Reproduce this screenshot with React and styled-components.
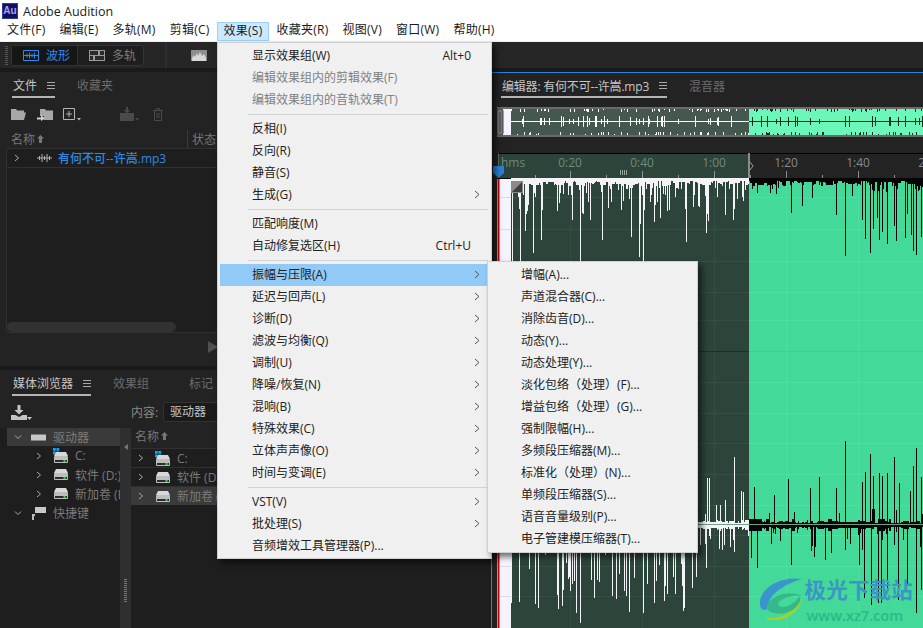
import React from "react";
import styled, { createGlobalStyle } from "styled-components";

const FONT = `"Open Sans", "Noto Sans CJK SC", sans-serif`;

const GlobalStyle = createGlobalStyle`
  html, body {
    margin: 0;
    background: #1c1c1c;
    overflow: hidden;
  }
  * { box-sizing: border-box; }
`;

// waveform data, seeded so the picture stays the same on each load
const makeRand = (seed) => () => {
  seed = (seed + 0x6d2b79f5) | 0;
  let t = Math.imul(seed ^ (seed >>> 15), 1 | seed);
  t = (t + Math.imul(t ^ (t >>> 7), 61 | t)) ^ t;
  return ((t ^ (t >>> 14)) >>> 0) / 4294967296;
};

const line = (x, y1, y2) => `M${x + 0.5} ${y1}V${y2}`;

const buildTop = (from, to, seed, chance, min, range) => {
  const rand = makeRand(seed);
  let d = "";
  let mass = 4;
  for (let x = from; x < to; x++) {
    if (rand() < 0.45) mass = 2 + rand() * 5;
    d += line(x, 178, 179 + mass);
    const p = typeof chance === "function" ? chance(x) : chance;
    if (rand() < p) d += line(x, 178, 186 + min + rand() * rand() * range);
  }
  return d;
};

const buildLower = (from, to, seed, upChance, downChance, upLen, downLen, band) => {
  const rand = makeRand(seed);
  let d = "";
  let mass = 2;
  for (let x = from; x < to; x++) {
    if (rand() < 0.4) mass = 1 + rand() * band + (rand() < 0.1 ? 2.5 : 0);
    d += line(x, 524 - mass, 526 + mass);
    if (rand() < upChance) d += line(x, 524, 516 - rand() * rand() * upLen);
    if (rand() < downChance) d += line(x, 524, 532 + rand() * downLen);
  }
  return d;
};

const spikes = (list, base) => list.map(([x, y]) => line(x, base, y)).join("");

const TOP_LIGHT =
  buildTop(510, 748, 11, 0.3, 2, 62) +
  spikes(
    [[511, 262], [519, 262], [532, 253], [540, 240], [579, 262], [638, 257], [642, 262], [653, 222], [668, 210], [685, 242], [705, 233], [724, 210], [697, 206], [706, 214], [707, 221], [733, 209]],
    178
  );
const TOP_DARK =
  buildTop(748, 923, 23, (x) => (x < 858 ? 0.05 : 0.2), 0, 22) +
  spikes(
    [[756, 193], [775, 194], [790, 213], [801, 206], [811, 198], [835, 215], [844, 256], [861, 220], [864, 239], [869, 253], [872, 229], [876, 218], [878, 240], [881, 232], [886, 244], [893, 226], [895, 241], [904, 238], [906, 214], [910, 235], [912, 251], [915, 255], [920, 237]],
    178
  );
const LOW_LIGHT =
  buildLower(510, 697, 37, 0.2, 0.34, 60, 82, 3) +
  buildLower(697, 748, 41, 0.05, 0.14, 10, 18, 3) +
  spikes([[706, 478], [708, 478], [715, 505], [719, 505], [724, 500], [733, 457], [740, 491], [742, 492]], 524) +
  spikes([[510, 603], [537, 608], [575, 613], [579, 623], [642, 613], [653, 603], [672, 577], [705, 568], [733, 552], [723, 545]], 524);
const LOW_DARK =
  buildLower(748, 923, 53, 0.06, 0.07, 24, 22, 2) +
  spikes(
    [[753, 487], [773, 495], [787, 479], [809, 488], [818, 477], [835, 488], [844, 441], [861, 482], [864, 472], [869, 454], [872, 476], [878, 473], [881, 476], [886, 473], [893, 457], [898, 483], [909, 491], [912, 466], [915, 448], [920, 477]],
    524
  ) +
  spikes(
    [[750, 558], [756, 568], [770, 544], [790, 565], [813, 557], [824, 560], [830, 553], [844, 550], [858, 565], [863, 598], [870, 605], [877, 603], [880, 603], [886, 590], [897, 600], [906, 584], [915, 613], [920, 590]],
    524
  );

const buildOverview = (from, to, seed) => {
  const rand = makeRand(seed);
  let d = "";
  for (let x = from; x < to; x++) {
    const big = rand() < 0.16;
    const h = big ? 1.5 + rand() * 4 : 0;
    d += line(x, 121 - h, 122 + h);
    if (rand() < 0.2) d += line(x, 109, 110 + rand() * 2.5);
    if (rand() < 0.2) d += line(x, 134 - rand() * 2.5, 135);
  }
  return d;
};
const OV_LIGHT = buildOverview(509, 748, 61);
const OV_DARK = buildOverview(748, 923, 67);

const Page = styled.div`
  position: relative;
  width: 923px;
  height: 628px;
  overflow: hidden;
  display: flex;
  flex-direction: column;
  font-family: ${FONT};
  font-size: 12px;
  background: #1a1a1a;
`;

const TitleBar = styled.div`
  height: 21px;
  background: #fff;
  display: flex;
  align-items: center;
  padding: 1px 0 0 2px;
  gap: 5px;
  color: #1a1a1a;
  font-size: 12.5px;
`;

const AppLogo = styled.div`
  width: 16px;
  height: 16px;
  background: #10105e;
  border: 1px solid #3a3a90;
  color: #a3a3ff;
  font-family: "Liberation Sans", sans-serif;
  font-size: 10px;
  font-weight: 700;
  line-height: 14px;
  text-align: center;
`;

const MenuBar = styled.div`
  height: 21px;
  background: #fff;
  border-bottom: 1px solid #f0f0f0;
  display: flex;
  align-items: flex-end;
  color: #1a1a1a;
  letter-spacing: 0.25px;
`;

const MenuEntry = styled.div`
  height: 19px;
  padding: 0 ${(p) => (p.$open ? 6 : 7)}px;
  line-height: 16px;
  ${(p) => p.$open && `background: #cce8ff; border: 1px solid #99d1ff;`}
`;

const ToolBar = styled.div`
  height: 26px;
  background: #262626;
  display: flex;
  align-items: center;
  padding-left: 5px;
`;

const Grip = styled.div`
  width: 3px;
  height: 19px;
  margin-right: 3px;
  background: repeating-linear-gradient(#555 0 1px, transparent 1px 2px);
`;

const ModeGroup = styled.div`
  width: 133px;
  height: 21px;
  display: flex;
  border: 1px solid #333;
  border-radius: 3px;
  background: #1e1e1e;
`;

const ModeButton = styled.div`
  flex: 1;
  display: flex;
  align-items: center;
  gap: 7px;
  padding-left: 11px;
  color: ${(p) => (p.$active ? "#2d8ceb" : "#7c7c7c")};
  background: ${(p) => (p.$active ? "#161616" : "transparent")};
  & + & { border-left: 1px solid #333; }
`;

const ToolDivider = styled.div`
  width: 2px;
  height: 26px;
  background: #2f2f2f;
  margin: 0 24px 0 21px;
`;

const Workspace = styled.div`
  flex: 1;
  min-height: 0;
  padding-top: 4px;
  display: grid;
  grid-template-columns: 491px 1fr;
`;

const LeftColumn = styled.div`
  display: flex;
  flex-direction: column;
  gap: 4px;
  min-height: 0;
`;

const Panel = styled.section`
  background: #232323;
  display: flex;
  flex-direction: column;
  min-height: 0;
  ${(p) => (p.$height ? `height: ${p.$height}px;` : "flex: 1;")}
`;

const TabRow = styled.div`
  height: ${(p) => p.$height || 26}px;
  flex-shrink: 0;
  display: flex;
  padding-left: ${(p) => p.$left || 12}px;
  gap: 22px;
`;

const Tab = styled.div`
  display: flex;
  align-items: center;
  gap: 10px;
  padding: 2px 0 0 ${(p) => (p.$active ? 1 : 0)}px;
  margin-left: ${(p) => p.$push || 0}px;
  color: ${(p) => (p.$active ? "#c6c6c6" : "#6c6c6c")};
  border-bottom: 2px solid ${(p) => (p.$active ? "#b4b4b4" : "transparent")};
`;

const EditorTab = styled(Tab)`
  letter-spacing: -0.2px;
`;

const FileTools = styled.div`
  height: 32px;
  flex-shrink: 0;
  display: flex;
  align-items: center;
  padding-left: 11px;
`;

const ToolIcon = styled.svg`
  display: block;
  flex-shrink: 0;
  margin-right: ${(p) => p.$gap || 0}px;
  margin-left: ${(p) => p.$lead || 0}px;
`;

const ColumnHead = styled.div`
  height: 18px;
  flex-shrink: 0;
  display: flex;
  align-items: center;
  padding-left: 11px;
  color: #777;
`;

const HeadCell = styled.div`
  width: ${(p) => p.$width}px;
  display: flex;
  align-items: center;
  gap: 2px;
  ${(p) => p.$divided && `border-left: 1px solid #3a3a3a; padding-left: 4px;`}
`;

const FileList = styled.div`
  height: 185px;
  flex-shrink: 0;
  margin-left: 6px;
  background: #1e1e1e;
  border: 1px solid #303030;
  border-width: 1px 0 1px 1px;
  display: flex;
  flex-direction: column;
`;

const FileRow = styled.div`
  height: 19px;
  display: flex;
  align-items: center;
  padding-left: 6px;
  border-bottom: 1px solid #303030;
`;

const FileName = styled.span`
  margin-left: 6px;
  color: #2f8ae0;
  font-weight: 500;
`;

const ScrollThumb = styled.div`
  margin-top: auto;
  width: 169px;
  height: 10px;
  border-radius: 5px;
  background: #323232;
`;

const PanelFoot = styled.div`
  flex: 1;
  display: flex;
  align-items: center;
  padding: 0 0 6px 208px;
`;

const MediaTools = styled.div`
  height: 32px;
  flex-shrink: 0;
  display: flex;
  align-items: center;
  padding-left: 11px;
`;

const ContentLabel = styled.span`
  margin-left: 99px;
  color: #8a8a8a;
  width: 32px;
`;

const ContentSelect = styled.div`
  width: 200px;
  height: 20px;
  background: #1a1a1a;
  border: 1px solid #333;
  border-radius: 3px;
  color: #c4c4c4;
  padding-left: 6px;
  line-height: 17px;
`;

const MediaBody = styled.div`
  flex: 1;
  min-height: 0;
  display: grid;
  grid-template-columns: 120px 11px 1fr;
`;

const Tree = styled.div`
  padding-left: 7px;
  background: #1e1e1e;
  overflow: hidden;
`;

const TreeRow = styled.div`
  display: flex;
  align-items: center;
  white-space: nowrap;
  height: ${(p) => (p.$head ? 18 : 19)}px;
  padding-left: ${(p) => (p.$child ? 28 : 7)}px;
  color: #7a7a7a;
  background: ${(p) => (p.$head ? "#3a3a3a" : "transparent")};
`;

const RowChevron = styled.svg`
  flex-shrink: 0;
  margin-right: ${(p) => (p.$down ? 9 : 10)}px;
`;

const RowLabel = styled.span`
  margin-left: 6px;
`;

const Splitter = styled.div`
  background: #2f2f2f;
  display: flex;
  flex-direction: column;
  align-items: center;
  padding-top: 16px;
`;

const SplitArrow = styled.div`
  width: 0;
  height: 0;
  border: 3px solid transparent;
  border-right: 4px solid #777;
  border-left: 0;
`;

const SplitDots = styled.div`
  width: 3px;
  height: 24px;
  margin-top: 129px;
  background: repeating-linear-gradient(#777 0 1px, transparent 1px 2px);
`;

const DriveList = styled.div`
  background: #1e1e1e;
  overflow: hidden;
`;

const DriveHead = styled.div`
  height: 20px;
  padding: 0 0 4px 4px;
  display: flex;
  align-items: center;
  gap: 2px;
  color: #777;
  background: #232323;
`;

const DriveRow = styled.div`
  height: 19px;
  display: flex;
  align-items: center;
  white-space: nowrap;
  padding-left: 6px;
  color: #7a7a7a;
  border-top: 1px solid #303030;
  background: ${(p) => (p.$selected ? "#3a3a3a" : "transparent")};
`;

const EditorPanel = styled.section`
  background: #232323;
  border-top: 1px solid #2a84e0;
  border-left: 1px solid #2a84e0;
  display: flex;
  flex-direction: column;
  min-height: 0;
`;

const EditorGutter = styled.div`
  margin-left: 5px;
  position: relative;
`;

const Overview = styled(EditorGutter)`
  height: 30px;
  margin-top: 9px;
  margin-bottom: 16px;
`;

const Ruler = styled(EditorGutter)`
  height: 25px;
`;

const Playhead = styled.svg`
  position: absolute;
  left: -4px;
  top: 13px;
`;

const Wave = styled(EditorGutter)`
  flex: 1;
`;

const Drawing = styled.svg`
  display: block;
`;

const Watermark = styled.div`
  position: absolute;
  right: 10px;
  bottom: 3px;
  display: flex;
  align-items: flex-start;
  gap: 1px;
`;

const MarkLogo = styled.svg`
  margin-top: 2px;
`;

const MarkText = styled.div`
  display: flex;
  flex-direction: column;
`;

const MarkTitle = styled.div`
  font-size: 21.5px;
  font-weight: 700;
  line-height: 28px;
  color: #3c95c4;
  letter-spacing: 0.2px;
`;

const MarkUrl = styled.div`
  margin: 3px 0 0 2px;
  font-size: 14.5px;
  font-weight: 600;
  line-height: 18px;
  color: #2cb88a;
`;

const Menu = styled.div`
  position: absolute;
  left: ${(p) => p.$left}px;
  top: ${(p) => p.$top}px;
  width: ${(p) => p.$width}px;
  background: #f0f0f0;
  border: 1px solid #cfcfcf;
  padding: 2px 2px ${(p) => p.$bottom}px;
  box-shadow: 4px 4px 6px rgba(0, 0, 0, 0.55);
  color: #222;
`;

const MenuRow = styled.div`
  height: 22px;
  display: flex;
  align-items: center;
  padding: 0 9px 2px ${(p) => p.$indent}px;
  color: ${(p) => (p.$disabled ? "#808080" : "#222")};
  background: ${(p) => (p.$active ? "#91c9f7" : "transparent")};
`;

const MenuLabel = styled.span`
  flex: 1;
  white-space: nowrap;
`;

const Shortcut = styled.span`
  margin-right: 9px;
`;

const MenuRule = styled.div`
  height: 7px;
  margin-left: 28px;
  margin-right: 1px;
  display: flex;
  align-items: center;
  &::after {
    content: "";
    flex: 1;
    height: 1px;
    background: #d2d2d2;
  }
`;

const Burger = () => (
  <svg width="8" height="7" viewBox="0 0 8 7">
    <path d="M0 .5H8M0 3.5H8M0 6.5H8" stroke="#aaa" fill="none" />
  </svg>
);

const SortArrow = () => (
  <svg width="7" height="8" viewBox="0 0 7 8">
    <path d="M3.5 0L7 3.5H5V8H2V3.5H0Z" fill="#777" />
  </svg>
);

const Chevron = ({ down }) => (
  <RowChevron $down={down} width="8" height="8" viewBox="0 0 8 8">
    <path d={down ? "M1 2.5L4 5.5L7 2.5" : "M2 1L5.5 4L2 7"} stroke="#aaa" fill="none" />
  </RowChevron>
);

const WaveGlyph = ({ color }) => (
  <ToolIcon $lead={6} width="15" height="8" viewBox="0 0 15 8">
    <path d="M0 4H15M2.5 2V6M5 0V8M7.5 2V6M10 0V8M12.5 2V6" stroke={color} fill="none" />
  </ToolIcon>
);

const Drive = () => (
  <ToolIcon width="16" height="11" viewBox="0 0 16 11">
    <path d="M3 0H13L15 4H1Z" fill="#d8d8d8" />
    <rect x="1" y="4" width="14" height="7" rx="1" fill="#bdbdbd" />
    <rect x="2" y="8" width="12" height="2" fill="#2c2c2c" />
    <rect x="10.500" y="8" width="2" height="2" fill="#35d04a" />
  </ToolIcon>
);

const SystemDrive = () => (
  <ToolIcon width="16" height="15" viewBox="0 0 16 15">
    <path d="M0 0H2.800V2.800H0ZM3.400 0H6.200V2.800H3.400ZM0 3.400H2.800V6.200H0ZM3.400 3.400H6.200V6.200H3.400Z" fill="#12a5f4" />
    <path d="M3 4H13L15 8H1Z" fill="#d8d8d8" />
    <rect x="1" y="8" width="14" height="7" rx="1" fill="#bdbdbd" />
    <rect x="2" y="12" width="12" height="2" fill="#2c2c2c" />
    <rect x="10.500" y="12" width="2" height="2" fill="#35d04a" />
  </ToolIcon>
);

const ArrowGlyph = () => (
  <svg width="6" height="9" viewBox="0 0 6 9">
    <path d="M1 1L5 4.500L1 8" stroke="#555" fill="none" />
  </svg>
);

const EFFECT_ITEMS = [
  { label: "显示效果组(W)", shortcut: "Alt+0" },
  { label: "编辑效果组内的剪辑效果(F)", disabled: true },
  { label: "编辑效果组内的音轨效果(T)", disabled: true },
  { rule: true },
  { label: "反相(I)" },
  { label: "反向(R)" },
  { label: "静音(S)" },
  { label: "生成(G)", more: true },
  { rule: true },
  { label: "匹配响度(M)" },
  { label: "自动修复选区(H)", shortcut: "Ctrl+U" },
  { rule: true },
  { label: "振幅与压限(A)", more: true, active: true },
  { label: "延迟与回声(L)", more: true },
  { label: "诊断(D)", more: true },
  { label: "滤波与均衡(Q)", more: true },
  { label: "调制(U)", more: true },
  { label: "降噪/恢复(N)", more: true },
  { label: "混响(B)", more: true },
  { label: "特殊效果(C)", more: true },
  { label: "立体声声像(O)", more: true },
  { label: "时间与变调(E)", more: true },
  { rule: true },
  { label: "VST(V)", more: true },
  { label: "批处理(S)", more: true },
  { label: "音频增效工具管理器(P)..." },
];

const AMPLITUDE_ITEMS = [
  "增幅(A)...",
  "声道混合器(C)...",
  "消除齿音(D)...",
  "动态(Y)...",
  "动态处理(Y)...",
  "淡化包络（处理）(F)...",
  "增益包络（处理）(G)...",
  "强制限幅(H)...",
  "多频段压缩器(M)...",
  "标准化（处理）(N)...",
  "单频段压缩器(S)...",
  "语音音量级别(P)...",
  "电子管建模压缩器(T)...",
];

const MENU_NAMES = ["文件(F)", "编辑(E)", "多轨(M)", "剪辑(C)", "效果(S)", "收藏夹(R)", "视图(V)", "窗口(W)", "帮助(H)"];

const RULER_MARKS = [
  [569, "0:20"],
  [641, "0:40"],
  [713, "1:00"],
  [785, "1:20"],
  [857, "1:40"],
  [929, "2:00"],
];

const GRID_ROWS = [197, 229, 261, 292, 320, 382, 413, 443, 474, 505, 535, 566, 596];
const GRID_COLS = [569, 641, 713, 785, 857];

const OverviewStrip = () => (
  <Drawing width="427" height="30" viewBox="496 107 427 30">
    <rect x="496" y="107" width="427" height="30" fill="#6a6a6a" />
    <rect x="502" y="109" width="8" height="26" fill="#f4f4ff" />
    <rect x="510" y="109" width="238" height="26" fill="#44584f" />
    <rect x="748" y="109" width="175" height="26" fill="#6bf7b9" />
    <path d={OV_LIGHT} stroke="#fff" fill="none" shapeRendering="crispEdges" />
    <path d={OV_DARK} stroke="#1c2a24" fill="none" shapeRendering="crispEdges" />
    <rect x="496" y="109" width="6" height="26" rx="2" fill="#777" stroke="#444" />
    <path d="M499 112V132" stroke="#444" />
  </Drawing>
);

const TimeRuler = () => (
  <Ruler>
    <Drawing width="427" height="25" viewBox="496 153 427 25">
      <rect x="496" y="153" width="427" height="25" fill="#232323" />
      <rect x="497" y="153" width="251" height="25" fill="#2c4439" />
      <path d="M496 153.500H923" stroke="#000" />
      <path d="M497.500 153V178" stroke="#5c6e66" />
      <text x="500" y="167" fontSize="12" fill="#6f8a7e" fontFamily={FONT}>hms</text>
      {RULER_MARKS.map(([x, label]) => (
        <g key={label}>
          <text x={x} y="167" fontSize="12" textAnchor="middle" fill={x < 748 ? "#6f8a7e" : "#8a8a8a"} fontFamily={FONT}>
            {label}
          </text>
          <path d={`M${x + 0.5} 171V178`} stroke={x < 748 ? "#8a9c94" : "#8a8a8a"} />
          <path d={`M${x + 36.5} 175V178`} stroke={x + 36 < 748 ? "#8a9c94" : "#8a8a8a"} />
        </g>
      ))}
      <path d="M534.500 175V178" stroke="#8a9c94" />
      <path d="M619.500 170V175M621.500 170V175M623.500 170V175M625.500 170V175" stroke="#9aa8a2" />
      <path d="M748 153V178" stroke="#8a8a8a" strokeWidth="2" />
      <path d="M749 162L752 166L749 170" stroke="#a0a0a0" fill="none" />
    </Drawing>
    <Playhead width="12" height="12" viewBox="0 0 12 12">
      <path d="M0 0H11V7L5.500 12L0 7Z" fill="#2a7fdc" />
    </Playhead>
  </Ruler>
);

const WaveForm = () => (
  <Wave>
    <Drawing width="427" height="450" viewBox="496 178 427 450">
      <rect x="496" y="178" width="427" height="450" fill="#43d998" />
      <rect x="496" y="178" width="14" height="450" fill="#f4f4ff" />
      <rect x="510" y="178" width="238" height="450" fill="#2c4439" />
      {GRID_ROWS.map((y) => (
        <g key={y}>
          <path d={`M510 ${y + 0.5}H748`} stroke="#335045" />
          <path d={`M748 ${y + 0.5}H923`} stroke="#4be0a0" />
          <path d={`M499 ${y + 0.5}H510`} stroke="#d9dbe0" />
        </g>
      ))}
      {GRID_COLS.map((x) => (
        <path key={x} d={`M${x + 0.5} 178V628`} stroke={x < 748 ? "#335045" : "#4be0a0"} />
      ))}
      <path d="M510 351.500H748" stroke="#1f2f28" />
      <path d="M748 351.500H923" stroke="#3fd091" />
      <path d="M496 178.500H923" stroke="#000" />
      <path d={TOP_LIGHT + LOW_LIGHT} stroke="#f4f4f8" fill="none" shapeRendering="crispEdges" />
      <path d={TOP_DARK + LOW_DARK} stroke="#050505" fill="none" shapeRendering="crispEdges" />
      <path d="M510 524.500H923" stroke="#6f9f88" />
      <rect x="510" y="181" width="12" height="12" fill="#8a8a8a" />
      <path d="M511 192L521 182V192Z" fill="#3c3c3c" />
      <path d="M497.500 179V628" stroke="#c80000" strokeWidth="2" />
    </Drawing>
  </Wave>
);

const LeftPanels = () => (
  <LeftColumn>
    <Panel $height={294}>
      <TabRow>
        <Tab $active>
          文件
          <Burger />
        </Tab>
        <Tab>收藏夹</Tab>
      </TabRow>
      <FileTools>
        <ToolIcon $gap={11} width="15" height="12" viewBox="0 0 15 12">
          <path d="M0 12V1H5L6 2.500H13V4.500H3L0 12H13L15 4.500H3" fill="#a8a8a8" />
        </ToolIcon>
        <ToolIcon $gap={10} width="16" height="13" viewBox="0 0 16 13">
          <path d="M3 1H8L9 2.500H16V12H7V8H3Z" fill="#a8a8a8" />
          <path d="M0 9.500H4V7L8 10.500L4 13V11.500H0Z" fill="#d0d0d0" />
        </ToolIcon>
        <ToolIcon $gap={38} width="18" height="13" viewBox="0 0 18 13">
          <path d="M.5.500H11.500V11.500H.5ZM6 3V9M3 6H9" stroke="#b4b4b4" fill="none" />
          <path d="M14 10H18L16 12.500Z" fill="#b4b4b4" />
        </ToolIcon>
        <ToolIcon $gap={14} width="20" height="14" viewBox="0 0 20 14">
          <path d="M7 0H9V3H11L8 6.500L5 3H7ZM1 6H15V14H1Z" fill="#4a4a4a" />
          <path d="M16 11H20L18 13.500Z" fill="#4a4a4a" />
        </ToolIcon>
        <ToolIcon width="10" height="13" viewBox="0 0 10 13">
          <path d="M0 2.500H10M3.500 2.500V.5H6.500V2.500M1.500 2.500V12.500H8.500V2.500M4 5V10M6 5V10" stroke="#4a4a4a" fill="none" />
        </ToolIcon>
      </FileTools>
      <ColumnHead>
        <HeadCell $width={176}>
          名称
          <SortArrow />
        </HeadCell>
        <HeadCell $width={100} $divided>
          状态
        </HeadCell>
      </ColumnHead>
      <FileList>
        <FileRow>
          <Chevron />
          <WaveGlyph color="#b0b0b0" />
          <FileName>有何不可--许嵩.mp3</FileName>
        </FileRow>
        <ScrollThumb />
      </FileList>
      <PanelFoot>
        <svg width="10" height="12" viewBox="0 0 10 12">
          <path d="M0 0L10 6L0 12Z" fill="#505050" />
        </svg>
      </PanelFoot>
    </Panel>
    <Panel>
      <TabRow>
        <Tab $active>
          媒体浏览器
          <Burger />
        </Tab>
        <Tab>效果组</Tab>
        <Tab $push={18}>标记</Tab>
      </TabRow>
      <MediaTools>
        <ToolIcon width="16" height="15" viewBox="0 0 16 15">
          <path d="M6.500 0H9.500V5H12.500L8 9.500L3.500 5H6.500ZM0 10H4.500L8 12L11.500 10H16V15H0Z" fill="#c4c4c4" />
        </ToolIcon>
        <ToolIcon width="5" height="15" viewBox="0 0 5 15">
          <path d="M0 12H5L2.500 15Z" fill="#c4c4c4" />
        </ToolIcon>
        <ContentLabel>内容:</ContentLabel>
        <ContentSelect>驱动器</ContentSelect>
      </MediaTools>
      <MediaBody>
        <Tree>
          <TreeRow $head>
            <Chevron down />
            <ToolIcon width="16" height="7" viewBox="0 0 16 7">
              <rect width="15" height="6" y=".5" fill="#c8c8c8" />
            </ToolIcon>
            <RowLabel>驱动器</RowLabel>
          </TreeRow>
          <TreeRow $child>
            <Chevron />
            <SystemDrive />
            <RowLabel>C:</RowLabel>
          </TreeRow>
          <TreeRow $child>
            <Chevron />
            <Drive />
            <RowLabel>软件 (D:)</RowLabel>
          </TreeRow>
          <TreeRow $child>
            <Chevron />
            <Drive />
            <RowLabel>新加卷 (E:)</RowLabel>
          </TreeRow>
          <TreeRow>
            <Chevron down />
            <ToolIcon width="16" height="14" viewBox="0 0 16 14">
              <path d="M4 1H15V7H4Z" fill="#c8c8c8" />
              <path d="M1 8H4V10H3V14H1Z" fill="#bbb" />
            </ToolIcon>
            <RowLabel>快捷键</RowLabel>
          </TreeRow>
        </Tree>
        <Splitter>
          <SplitArrow />
          <SplitDots />
        </Splitter>
        <DriveList>
          <DriveHead>
            名称
            <SortArrow />
          </DriveHead>
          <DriveRow>
            <Chevron />
            <SystemDrive />
            <RowLabel>C:</RowLabel>
          </DriveRow>
          <DriveRow>
            <Chevron />
            <Drive />
            <RowLabel>软件 (D:)</RowLabel>
          </DriveRow>
          <DriveRow $selected>
            <Chevron />
            <Drive />
            <RowLabel>新加卷 (E:)</RowLabel>
          </DriveRow>
        </DriveList>
      </MediaBody>
    </Panel>
  </LeftColumn>
);

const EffectsMenu = () => (
  <Menu $left={217} $top={42} $width={275} $bottom={1}>
    {EFFECT_ITEMS.map((item, i) =>
      item.rule ? (
        <MenuRule key={i} />
      ) : (
        <MenuRow key={item.label} $indent={32} $disabled={item.disabled} $active={item.active}>
          <MenuLabel>{item.label}</MenuLabel>
          {item.shortcut && <Shortcut>{item.shortcut}</Shortcut>}
          {item.more && <ArrowGlyph />}
        </MenuRow>
      )
    )}
    <Menu $left={269} $top={218} $width={211} $bottom={2}>
      {AMPLITUDE_ITEMS.map((label) => (
        <MenuRow key={label} $indent={31}>
          <MenuLabel>{label}</MenuLabel>
        </MenuRow>
      ))}
    </Menu>
  </Menu>
);

export default function App() {
  return (
    <Page>
      <GlobalStyle />
      <TitleBar>
        <AppLogo>Au</AppLogo>
        Adobe Audition
      </TitleBar>
      <MenuBar>
        {MENU_NAMES.map((name) => (
          <MenuEntry key={name} $open={name === "效果(S)"}>
            {name}
          </MenuEntry>
        ))}
      </MenuBar>
      <ToolBar>
        <Grip />
        <ModeGroup>
          <ModeButton $active>
            <ToolIcon width="16" height="11" viewBox="0 0 16 11">
              <path d="M.5.500H15.500V10.500H.5ZM1 5.500H15M4 3.500V7.500M6.500 2.500V8.500M9 3.500V7.500M11.500 2.500V8.500" stroke="#2d8ceb" fill="none" />
            </ToolIcon>
            波形
          </ModeButton>
          <ModeButton>
            <ToolIcon width="16" height="11" viewBox="0 0 16 11">
              <path d="M0 0H16V11H0Z" fill="#9a9a9a" />
              <path d="M1 5H9V1H1ZM11 5H15V1H11ZM1 10H4V6H1ZM6 10H15V6H6Z" fill="#2a2a2a" />
            </ToolIcon>
            多轨
          </ModeButton>
        </ModeGroup>
        <ToolDivider />
        <ToolIcon width="16" height="11" viewBox="0 0 16 11">
          <rect width="16" height="11" fill="#8e8e8e" />
          <path d="M1 11V8L3 5L4 7L6 3L7 6L9 2L11 6L13 4L15 8V11Z" fill="#d8d8d8" />
        </ToolIcon>
      </ToolBar>
      <Workspace>
        <LeftPanels />
        <EditorPanel>
          <TabRow $height={25} $left={9}>
            <EditorTab $active>
              编辑器: 有何不可--许嵩.mp3
              <Burger />
            </EditorTab>
            <Tab>混音器</Tab>
          </TabRow>
          <Overview>
            <OverviewStrip />
          </Overview>
          <TimeRuler />
          <WaveForm />
        </EditorPanel>
      </Workspace>
      <EffectsMenu />
      <Watermark>
        <MarkLogo width="44" height="42" viewBox="0 0 44 42">
          <path d="M43 1C24-2 3 8 1 23C0 31 5 35 10 29C7 20 22 7 43 1Z" fill="#3b93cf" />
          <path d="M8 27C14 16 32 12 43 18C35 16 21 20 19 26C21 32 33 29 41 18C44 28 29 38 15 35C10 34 7 31 8 27Z" fill="#35b98a" />
          <path d="M6 39C22 42 37 34 43 20C41 34 27 44 10 42Z" fill="#a8cf2c" />
        </MarkLogo>
        <MarkText>
          <MarkTitle>极光下载站</MarkTitle>
          <MarkUrl>www.xz7.com</MarkUrl>
        </MarkText>
      </Watermark>
    </Page>
  );
}
